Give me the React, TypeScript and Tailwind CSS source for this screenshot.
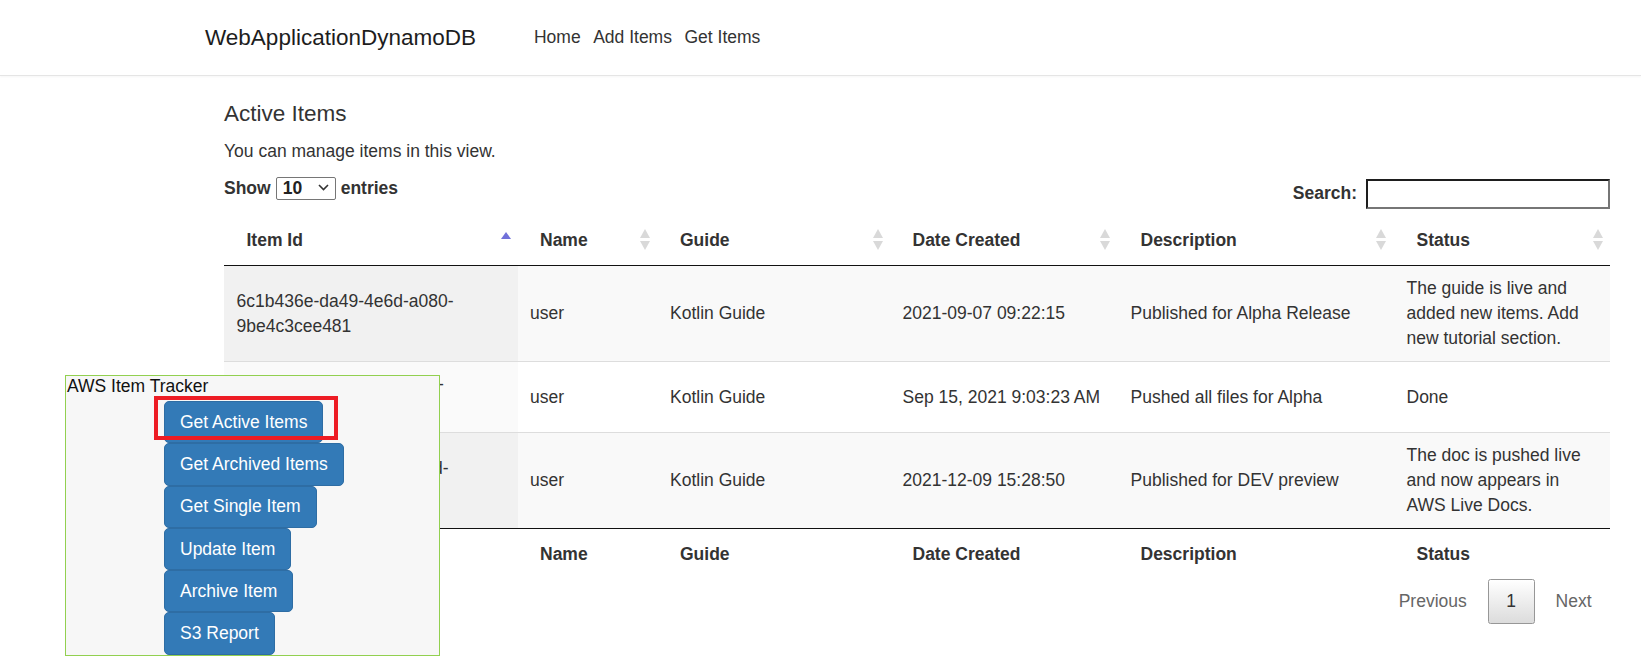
import React from "react";

interface Item {
  id: string;
  name: string;
  guide: string;
  date: string;
  description: string;
  status: string;
}

const items: Item[] = [
  {
    id: "6c1b436e-da49-4e6d-a080-9be4c3cee481",
    name: "user",
    guide: "Kotlin Guide",
    date: "2021-09-07 09:22:15",
    description: "Published for Alpha Release",
    status: "The guide is live and added new items. Add new tutorial section.",
  },
  {
    id: "8f0b5e6a-9c4d-4bfe-a5d2-7a0e2d4c9b1e",
    name: "user",
    guide: "Kotlin Guide",
    date: "Sep 15, 2021 9:03:23 AM",
    description: "Pushed all files for Alpha",
    status: "Done",
  },
  {
    id: "3a7e1c5b-92f0-4d8e-b61d-0c4f8a2e9b73",
    name: "user",
    guide: "Kotlin Guide",
    date: "2021-12-09 15:28:50",
    description: "Published for DEV preview",
    status: "The doc is pushed live and now appears in AWS Live Docs.",
  },
];

const columns = ["Item Id", "Name", "Guide", "Date Created", "Description", "Status"];
const widths = ["w-[293.5px]", "w-[140px]", "w-[232.5px]", "w-[228px]", "w-[276px]", "w-[216px]"];
const iconRight = ["right-[6.5px]", "right-[7.5px]", "right-[7.5px]", "right-[8px]", "right-[8px]", "right-[7.5px]"];

const SortIcon = ({ asc }: { asc?: boolean }) => (
  <svg width="10" height="24" viewBox="0 0 10 24">
    {asc ? (
      <polygon points="5,4 10,11 0,11" fill="#7171da" />
    ) : (
      <>
        <polygon points="5,1 10,10 0,10" fill="#d9d9d9" />
        <polygon points="0,13 10,13 5,22" fill="#d9d9d9" />
      </>
    )}
  </svg>
);

const menu = [
  "Get Active Items",
  "Get Archived Items",
  "Get Single Item",
  "Update Item",
  "Archive Item",
  "S3 Report",
];

export default function App() {
  return (
    <div className="relative min-h-[672px] bg-white font-['Liberation_Sans',Arial,sans-serif] text-[17.5px] leading-[25px] text-[#333]">
      <nav className="h-[76px] border-b border-[#e5e5e5] shadow-[0_1px_2px_rgba(0,0,0,0.04)] flex items-center">
        <span className="ml-[205px] text-[22.5px] text-[#1d1d1d]">WebApplicationDynamoDB</span>
        <div className="ml-[58px] flex gap-[12.5px] text-[#333]">
          <a>Home</a>
          <a>Add Items</a>
          <a>Get Items</a>
        </div>
      </nav>

      <main className="ml-[224px] w-[1386px]">
        <h4 className="mt-[25px] text-[22.5px] leading-[25px] text-[#333]">Active Items</h4>
        <p className="mt-[13px]">You can manage items in this view.</p>

        <div className="mt-[13px] flex justify-between items-start">
          <label className="flex items-center gap-[5px] h-[23px] font-bold">
            Show
            <span className="relative inline-block">
              <select className="appearance-none w-[60px] h-[23px] border border-[#767676] rounded-[2px] bg-white pl-[6px] font-bold text-[17.5px] leading-[21px] text-[#222]">
                <option>10</option>
              </select>
              <svg className="pointer-events-none absolute right-[7px] top-[8px]" width="11" height="7" viewBox="0 0 11 7">
                <polyline points="1,1 5.5,5.5 10,1" fill="none" stroke="#333" strokeWidth="1.6" />
              </svg>
            </span>
            entries
          </label>
          <label className="flex items-center gap-[9px] h-[30px] font-bold pt-[3px]">
            Search:
            <input className="w-[244px] h-[30px] border-2 border-t-[#1e1e1e] border-l-[#1e1e1e] border-b-[#767676] border-r-[#767676] bg-white" />
          </label>
        </div>

        <table className="mt-[8px] w-[1386px] table-fixed border-separate border-spacing-0">
          <thead>
            <tr>
              {columns.map((c, i) => (
                <th
                  key={c}
                  className={`relative ${widths[i]} text-left font-bold pl-[22.5px] pr-[37.5px] py-[12.5px] border-b border-[#111]`}
                >
                  {c}
                  <span className={`absolute top-[13px] ${iconRight[i]}`}>
                    <SortIcon asc={i === 0} />
                  </span>
                </th>
              ))}
            </tr>
          </thead>
          <tbody>
            {items.map((it, r) => {
              const odd = r % 2 === 0;
              const border = r === 0 ? "" : "border-t border-[#ddd]";
              const cell = `px-[12.5px] py-[10px] align-middle ${border}`;
              return (
                <tr key={it.id} className={odd ? "bg-[#f9f9f9]" : "bg-white"}>
                  <td className={`${cell} break-words ${odd ? "bg-[#f1f1f1]" : "bg-[#fafafa]"}`}>{it.id}</td>
                  <td className={cell}>{it.name}</td>
                  <td className={cell}>{it.guide}</td>
                  <td className={cell}>{it.date}</td>
                  <td className={cell}>{it.description}</td>
                  <td className={cell}>{it.status}</td>
                </tr>
              );
            })}
          </tbody>
          <tfoot>
            <tr>
              {columns.map((c) => (
                <th key={c} className="text-left font-bold px-[22.5px] pt-[13px] pb-[7px] border-t border-[#111]">
                  {c}
                </th>
              ))}
            </tr>
          </tfoot>
        </table>

        <div className="mt-[5px] flex justify-end items-center gap-[2.5px]">
          <span className="px-[17.5px] py-[8.75px] border border-transparent text-[#666]">Previous</span>
          <span className="px-[17.5px] py-[8.75px] border border-[#979797] rounded-[2.5px] bg-gradient-to-b from-white to-[#dcdcdc] text-[#333]">
            1
          </span>
          <span className="px-[17.5px] py-[8.75px] border border-transparent text-[#666]">Next</span>
        </div>
      </main>

      {/* floating tracker panel */}
      <div className="absolute left-[65px] top-[375px] w-[375px] h-[281px] border border-[#92d050] bg-[#f7f7f7] pl-px">
        <div className="leading-[20px] text-[#111]">AWS Item Tracker</div>
        <div className="mt-[5px] ml-[97px] flex flex-col items-start">
          {menu.map((m) => (
            <button
              key={m}
              className="h-[42.3px] px-[15px] leading-[25px] text-[17.5px] text-white bg-[#337ab7] border border-[#2e6da4] rounded-[5px]"
            >
              {m}
            </button>
          ))}
        </div>
      </div>
      <div className="absolute left-[154px] top-[396px] w-[184px] h-[44px] border-4 border-[#ed1c24]" />
    </div>
  );
}
